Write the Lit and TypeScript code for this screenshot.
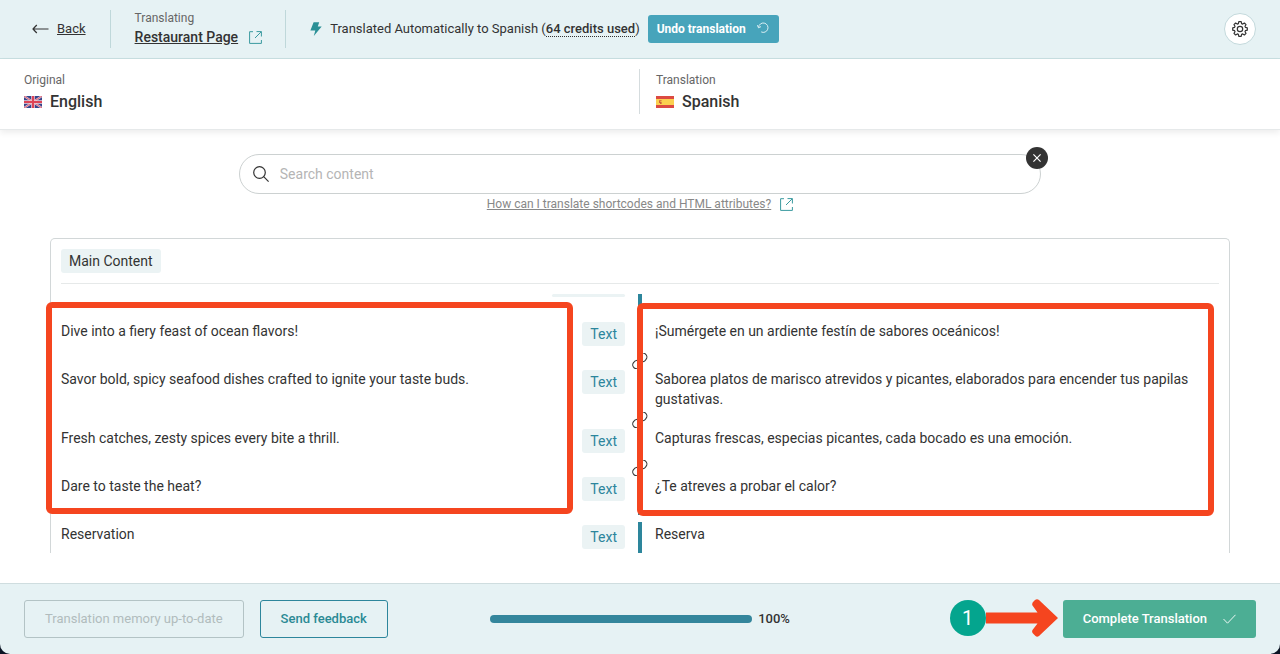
import { LitElement, html, css, svg } from "lit";
import { customElement, state } from "lit/decorators.js";

interface Segment {
  source: string;
  target: string;
  linked?: boolean;
}

const SEGMENTS: Segment[] = [
  { source: "Dive into a fiery feast of ocean flavors!", target: "¡Sumérgete en un ardiente festín de sabores oceánicos!" },
  {
    source: "Savor bold, spicy seafood dishes crafted to ignite your taste buds.",
    target: "Saborea platos de marisco atrevidos y picantes, elaborados para encender tus papilas gustativas.",
    linked: true,
  },
  { source: "Fresh catches, zesty spices every bite a thrill.", target: "Capturas frescas, especias picantes, cada bocado es una emoción.", linked: true },
  { source: "Dare to taste the heat?", target: "¿Te atreves a probar el calor?", linked: true },
  { source: "Reservation", target: "Reserva" },
];

const externalIcon = html`<svg class="external" viewBox="0 0 13 13" width="13" height="13" aria-hidden="true">
  ${svg`<path d="M4 .7H.6v11.7h11.8V9M7.5.6h4.9v4.9M12.2.8 6 7" fill="none" stroke="currentColor"/>`}
</svg>`;

@customElement("app-root")
export class AppRoot extends LitElement {
  @state() private progress = 100;

  static styles = css`
    :host {
      display: block;
      font-family: Roboto, "Liberation Sans", sans-serif;
      font-size: 14px;
      line-height: 20px;
      color: #333;
    }
    * {
      box-sizing: border-box;
    }
    a {
      color: inherit;
    }
    button {
      font: inherit;
      cursor: pointer;
    }
    svg {
      display: block;
      flex: none;
    }
    .page {
      display: flex;
      flex-direction: column;
      height: 100vh;
      background: #0b1424;
    }
    .top {
      display: flex;
      align-items: center;
      padding: 10px 24px;
      background: #e6f2f4;
      border-bottom: 1px solid #c8dfe1;
      flex: none;
    }
    .back {
      display: flex;
      align-items: center;
      gap: 8px;
      padding: 0 24px 0 8px;
      font-size: 13px;
    }
    .project {
      padding: 0 23px 0 24px;
      border-left: 1px solid #bfd8da;
      border-right: 1px solid #bfd8da;
      height: 38px;
    }
    .caption {
      font-size: 12px;
      color: #666;
    }
    .project .caption {
      line-height: 16px;
    }
    .title {
      display: flex;
      align-items: center;
      gap: 11px;
      font-weight: 500;
      line-height: 22px;
    }
    .external {
      color: #3a9a9f;
    }
    .status {
      display: flex;
      align-items: center;
      gap: 8px;
      padding-left: 24px;
      font-size: 13px;
    }
    .credits {
      font-weight: 500;
      border-bottom: 1px dotted #333;
    }
    .undo {
      display: flex;
      align-items: center;
      gap: 11px;
      height: 28px;
      padding: 0 10px 0 9px;
      border: 0;
      border-radius: 3px;
      background: #47a4bb;
      color: #fff;
      font-size: 12px;
      font-weight: 700;
    }
    .settings {
      display: grid;
      place-items: center;
      width: 32px;
      height: 32px;
      padding: 0;
      margin-left: auto;
      border: 1px solid #c3d9dc;
      border-radius: 50%;
      background: #fff;
      color: #333;
    }
    .languages {
      display: grid;
      grid-template-columns: 1fr 1fr;
      padding: 10px 0 15px;
      background: #fff;
      border-bottom: 1px solid #e6e9ea;
      box-shadow: 0 3px 6px rgba(0, 0, 0, 0.07);
      position: relative;
      flex: none;
    }
    .language {
      padding: 1px 0 0 24px;
      height: 45px;
    }
    .language + .language {
      padding-left: 16px;
      margin-left: -1px;
      border-left: 1px solid #d5dcde;
    }
    .name {
      display: flex;
      align-items: center;
      gap: 8px;
      font-size: 16px;
      font-weight: 500;
      line-height: 24px;
    }
    main {
      flex: 1;
      min-height: 0;
      display: flex;
      flex-direction: column;
      padding: 24px 50px 30px;
      background: #fff;
    }
    .search {
      display: flex;
      align-items: center;
      align-self: center;
      gap: 11px;
      width: 68%;
      height: 40px;
      padding: 0 13px;
      border: 1px solid #ccd1d1;
      border-radius: 20px;
      position: relative;
      flex: none;
    }
    .search input {
      flex: 1;
      border: 0;
      outline: 0;
      padding: 0;
      background: none;
      font: inherit;
      color: #333;
    }
    .search input::placeholder {
      color: #b5b5b5;
    }
    .clear {
      position: absolute;
      top: -8px;
      right: -8px;
      display: grid;
      place-items: center;
      width: 22px;
      height: 22px;
      padding: 0;
      border: 0;
      border-radius: 50%;
      background: #333;
      color: #fff;
    }
    .help {
      display: flex;
      align-items: center;
      align-self: center;
      gap: 9px;
      font-size: 12px;
      color: #888;
      margin-bottom: 24px;
    }
    .panel {
      flex: 1;
      min-height: 0;
      display: flex;
      flex-direction: column;
      border: 1px solid #d2d7d8;
      border-bottom: 0;
      border-radius: 5px 5px 0 0;
    }
    .heading {
      margin: 0 10px 10px;
      padding: 10px 0;
      border-bottom: 1px solid #e6e9e9;
      flex: none;
    }
    h2 {
      display: inline-block;
      vertical-align: top;
      margin: 0;
      padding: 2px 8px;
      border-radius: 3px;
      background: #ebf3f4;
      font-size: 14px;
      font-weight: 400;
    }
    .viewport {
      flex: 1;
      min-height: 0;
      position: relative;
    }
    .rows {
      height: 100%;
      overflow: hidden;
    }
    .row {
      display: grid;
      grid-template-columns: 1fr 1fr;
      position: relative;
      min-height: 48px;
    }
    .source {
      display: flex;
      justify-content: space-between;
      align-items: flex-start;
      padding: 9px 15px 9px 10px;
    }
    .kind {
      margin-top: 1px;
      padding: 2px 8px;
      border-radius: 3px;
      background: #ebf3f4;
      color: #2c859c;
    }
    .target {
      margin: 7px 0 0 -2px;
      padding: 2px 10px 10px 13px;
      border-left: 4px solid #2d869c;
    }
    .row.previous {
      min-height: 18px;
    }
    .previous .source {
      padding-top: 0;
      padding-bottom: 0;
      justify-content: flex-end;
    }
    .previous .kind {
      width: 73px;
      height: 3px;
      margin: 0;
      padding: 0;
    }
    .previous .target {
      margin-top: 0;
    }
    .link {
      position: absolute;
      top: -7px;
      left: calc(50% - 8px);
      color: #333;
    }
    .mark {
      position: absolute;
      border: 6px solid #f5451f;
      border-radius: 6px;
      pointer-events: none;
    }
    .mark.left {
      left: -5px;
      right: calc(50% + 67px);
      top: 8px;
      bottom: 39px;
    }
    .mark.right {
      left: calc(50% - 3px);
      right: 15px;
      top: 9px;
      bottom: 37px;
    }
    footer {
      display: grid;
      grid-template-columns: 1fr auto 1fr;
      align-items: center;
      padding: 16px 24px;
      background: #e6f2f4;
      border-top: 1px solid #cfdddf;
      border-radius: 0 0 10px 10px;
      flex: none;
    }
    .group {
      display: flex;
      gap: 16px;
    }
    .action {
      height: 38px;
      padding: 0 20px;
      border: 1px solid #2d869c;
      border-radius: 3px;
      background: transparent;
      color: #2a8a94;
      font-size: 13px;
      font-weight: 500;
    }
    .action:disabled {
      border-color: #b3c3c5;
      color: #b1bcbd;
      font-weight: 400;
    }
    .progress {
      display: flex;
      align-items: center;
      gap: 6px;
      font-size: 13px;
      font-weight: 500;
    }
    .track {
      width: 262px;
      height: 8px;
      border-radius: 4px;
      background: #cfe2e5;
      overflow: hidden;
    }
    .fill {
      height: 100%;
      background: #34869c;
    }
    .finish {
      justify-self: end;
      position: relative;
    }
    .complete {
      display: flex;
      align-items: center;
      gap: 16px;
      border: 0;
      background: #4cae94;
      color: #fff;
    }
    .step {
      position: absolute;
      right: calc(100% + 5px);
      top: 0;
      display: flex;
      align-items: center;
      height: 36px;
    }
    .number {
      display: grid;
      place-items: center;
      width: 36px;
      height: 36px;
      border-radius: 50%;
      background: #04a58e;
      color: #fff;
      font-size: 20px;
    }
  `;

  private renderRow(s: Segment) {
    return html`<div class="row">
      <div class="source"><span>${s.source}</span><span class="kind">Text</span></div>
      <div class="target" lang="es">${s.target}</div>
      ${s.linked
        ? html`<svg class="link" viewBox="0 0 16 16" width="16" height="16" fill="none" stroke="currentColor" stroke-width="1.1" aria-hidden="true">
            <path d="M6.500 3.200 8.200 1.600a3.600 3.600 0 0 1 5.800 4.800q-1 2-3.500 2.600M9 12.500l-1.500 1.700a3.600 3.600 0 0 1-6-4.500q1-2 3.500-2.500M6 10l4-4" />
          </svg>`
        : ""}
    </div>`;
  }

  render() {
    return html`<div class="page">
      <header class="top">
        <div class="back">
          <svg viewBox="0 0 17 10" width="17" height="10" fill="none" stroke="#333" stroke-width="1.2" aria-hidden="true">
            <path d="M16.5 5H1M4.8 1 1 5l3.8 4" stroke-linejoin="round" />
          </svg>
          <a href="#back">Back</a>
        </div>
        <div class="project">
          <div class="caption">Translating</div>
          <div class="title"><a href="#page">Restaurant Page</a>${externalIcon}</div>
        </div>
        <div class="status">
          <svg viewBox="0 0 12 14" width="12" height="14" fill="#2a9096" aria-hidden="true">
            <path d="M3.600.200h5.600L7.800 4.400h3.900L3.800 13.900l1.500-5.300H.4z" />
          </svg>
          <span>Translated Automatically to Spanish (<span class="credits">64 credits used</span>)</span>
          <button class="undo" type="button">
            Undo translation
            <svg viewBox="0 0 12 14" width="12" height="14" fill="none" stroke="#d9eef3" aria-hidden="true">
              <path d="M1.600 5.400A4.700 4.700 0 1 1 4.200 9.900M.4 3.200l1.100 2.600 2.500-1.200" />
            </svg>
          </button>
        </div>
        <button class="settings" type="button" aria-label="Settings">
          <svg viewBox="0 0 16 16" width="16" height="16" fill="none" stroke="currentColor" stroke-width="1.2" stroke-linejoin="round" aria-hidden="true">
            <path d="M6.8.7h2.4l.4 1.9 1.1.5 1.7-1.1L14 3.7l-1 1.6.4 1.1 1.9.4v2.4l-1.9.4-.4 1.1 1 1.6-1.6 1.7-1.7-1.1-1.1.5-.4 1.9H6.8l-.4-1.9-1.1-.5L3.6 14 2 12.3l1-1.600-.4-1.1-1.9-.4V6.8l1.9-.4L3 5.3l-1-1.600L3.600 2l1.7 1.1 1.1-.5z" />
            <circle cx="8" cy="8" r="2.700" />
          </svg>
        </button>
      </header>

      <section class="languages">
        <div class="language">
          <div class="caption">Original</div>
          <div class="name">
            <svg viewBox="0 0 18 12" width="18" height="12" aria-hidden="true">
              <path fill="#34458c" d="M0 0h18v12H0z" />
              <path stroke="#e5c3d2" stroke-width="2" d="m0 0 18 12M18 0 0 12" />
              <path stroke="#d9586a" stroke-width=".9" d="m0 0 18 12M18 0 0 12" />
              <path stroke="#f0d3dc" stroke-width="3.600" d="M9 0v12M0 6h18" />
              <path stroke="#dd4456" stroke-width="2.200" d="M9 0v12M0 6h18" />
            </svg>
            English
          </div>
        </div>
        <div class="language">
          <div class="caption">Translation</div>
          <div class="name">
            <svg viewBox="0 0 18 12" width="18" height="12" aria-hidden="true">
              <path fill="#dc4a42" d="M0 0h18v12H0z" />
              <path fill="#fbd04f" d="M0 3h18v6H0z" />
              <path fill="#d0603c" d="M3 4.3h2.600v1H4.200v.8h1.400V8H4V6.900H3z" />
            </svg>
            Spanish
          </div>
        </div>
      </section>

      <main>
        <div class="search">
          <svg viewBox="0 0 16 16" width="16" height="16" fill="none" stroke="#333" stroke-width="1.2" aria-hidden="true">
            <circle cx="6.500" cy="6.500" r="5.800" /><path d="m10.700 10.700 4.900 4.900" />
          </svg>
          <input type="text" placeholder="Search content" aria-label="Search content" />
          <button class="clear" type="button" aria-label="Close search">
            <svg viewBox="0 0 8 8" width="8" height="8" stroke="currentColor" stroke-width="1.2" aria-hidden="true"><path d="m.4.4 7.200 7.200M7.600.4.4 7.600" /></svg>
          </button>
        </div>
        <div class="help"><a href="#shortcodes">How can I translate shortcodes and HTML attributes?</a>${externalIcon}</div>

        <section class="panel">
          <div class="heading"><h2>Main Content</h2></div>
          <div class="viewport">
            <div class="rows">
              <div class="row previous">
                <div class="source"><span class="kind"></span></div>
                <div class="target"></div>
              </div>
              ${SEGMENTS.map((s) => this.renderRow(s))}
            </div>
            <div class="mark left"></div>
            <div class="mark right"></div>
          </div>
        </section>
      </main>

      <footer>
        <div class="group">
          <button class="action" type="button" disabled>Translation memory up-to-date</button>
          <button class="action" type="button">Send feedback</button>
        </div>
        <div class="progress">
          <div class="track"><div class="fill" style="width:${this.progress}%"></div></div>
          <span>${this.progress}%</span>
        </div>
        <div class="finish">
          <div class="step">
            <span class="number">1</span>
            <svg viewBox="0 0 72 40" width="72" height="40" aria-hidden="true">
              <path fill="#f5451f" d="M0 14.500h51.500L46.500 7.500q-1-2 1-4l1.500-1.500q2-1.500 4 0L72 20 53 38q-2 1.500-3.500 0L47 35.500q-1.500-1.500-.5-3.500l5-6.500H0z" />
            </svg>
          </div>
          <button class="action complete" type="button">
            Complete Translation
            <svg viewBox="0 0 13 10" width="13" height="12" fill="none" stroke="#fff" stroke-width=".9" aria-hidden="true"><path d="m.5 5 4 4.200L12.500.8" /></svg>
          </button>
        </div>
      </footer>
    </div>`;
  }
}
